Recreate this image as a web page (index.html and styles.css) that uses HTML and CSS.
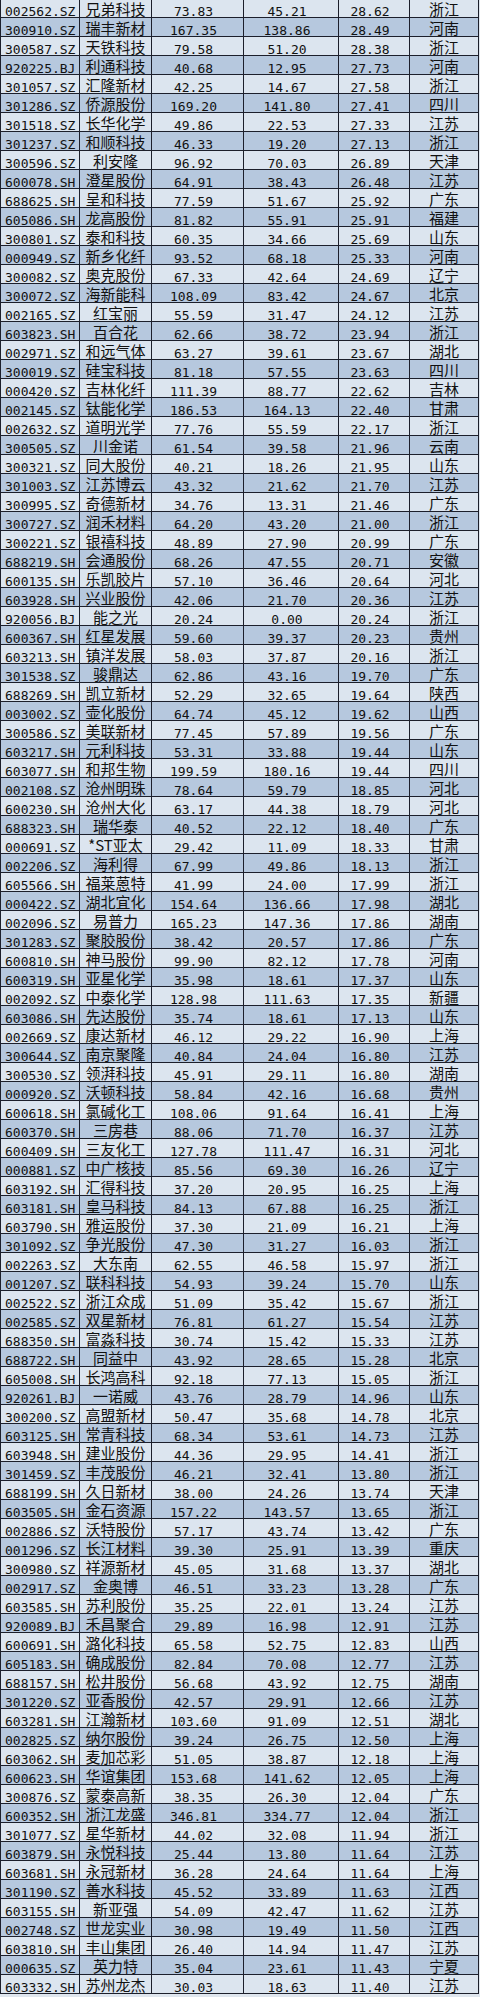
FILE: index.html
```html
<!DOCTYPE html>
<html lang="zh-CN">
<head>
<meta charset="utf-8">
<title>股票列表</title>
<link rel="stylesheet" href="styles.css">
</head>
<body>
<table class="sheet">
<colgroup>
<col class="c-code"><col class="c-name"><col class="c-a"><col class="c-b"><col class="c-c"><col class="c-prov">
</colgroup>
<tbody>
<tr><td class="code">002562.SZ</td><td class="name">兄弟科技</td><td class="num">73.83</td><td class="num">45.21</td><td class="num">28.62</td><td class="prov">浙江</td></tr>
<tr><td class="code">300910.SZ</td><td class="name">瑞丰新材</td><td class="num">167.35</td><td class="num">138.86</td><td class="num">28.49</td><td class="prov">河南</td></tr>
<tr><td class="code">300587.SZ</td><td class="name">天铁科技</td><td class="num">79.58</td><td class="num">51.20</td><td class="num">28.38</td><td class="prov">浙江</td></tr>
<tr><td class="code">920225.BJ</td><td class="name">利通科技</td><td class="num">40.68</td><td class="num">12.95</td><td class="num">27.73</td><td class="prov">河南</td></tr>
<tr><td class="code">301057.SZ</td><td class="name">汇隆新材</td><td class="num">42.25</td><td class="num">14.67</td><td class="num">27.58</td><td class="prov">浙江</td></tr>
<tr><td class="code">301286.SZ</td><td class="name">侨源股份</td><td class="num">169.20</td><td class="num">141.80</td><td class="num">27.41</td><td class="prov">四川</td></tr>
<tr><td class="code">301518.SZ</td><td class="name">长华化学</td><td class="num">49.86</td><td class="num">22.53</td><td class="num">27.33</td><td class="prov">江苏</td></tr>
<tr><td class="code">301237.SZ</td><td class="name">和顺科技</td><td class="num">46.33</td><td class="num">19.20</td><td class="num">27.13</td><td class="prov">浙江</td></tr>
<tr><td class="code">300596.SZ</td><td class="name">利安隆</td><td class="num">96.92</td><td class="num">70.03</td><td class="num">26.89</td><td class="prov">天津</td></tr>
<tr><td class="code">600078.SH</td><td class="name">澄星股份</td><td class="num">64.91</td><td class="num">38.43</td><td class="num">26.48</td><td class="prov">江苏</td></tr>
<tr><td class="code">688625.SH</td><td class="name">呈和科技</td><td class="num">77.59</td><td class="num">51.67</td><td class="num">25.92</td><td class="prov">广东</td></tr>
<tr><td class="code">605086.SH</td><td class="name">龙高股份</td><td class="num">81.82</td><td class="num">55.91</td><td class="num">25.91</td><td class="prov">福建</td></tr>
<tr><td class="code">300801.SZ</td><td class="name">泰和科技</td><td class="num">60.35</td><td class="num">34.66</td><td class="num">25.69</td><td class="prov">山东</td></tr>
<tr><td class="code">000949.SZ</td><td class="name">新乡化纤</td><td class="num">93.52</td><td class="num">68.18</td><td class="num">25.33</td><td class="prov">河南</td></tr>
<tr><td class="code">300082.SZ</td><td class="name">奥克股份</td><td class="num">67.33</td><td class="num">42.64</td><td class="num">24.69</td><td class="prov">辽宁</td></tr>
<tr><td class="code">300072.SZ</td><td class="name">海新能科</td><td class="num">108.09</td><td class="num">83.42</td><td class="num">24.67</td><td class="prov">北京</td></tr>
<tr><td class="code">002165.SZ</td><td class="name">红宝丽</td><td class="num">55.59</td><td class="num">31.47</td><td class="num">24.12</td><td class="prov">江苏</td></tr>
<tr><td class="code">603823.SH</td><td class="name">百合花</td><td class="num">62.66</td><td class="num">38.72</td><td class="num">23.94</td><td class="prov">浙江</td></tr>
<tr><td class="code">002971.SZ</td><td class="name">和远气体</td><td class="num">63.27</td><td class="num">39.61</td><td class="num">23.67</td><td class="prov">湖北</td></tr>
<tr><td class="code">300019.SZ</td><td class="name">硅宝科技</td><td class="num">81.18</td><td class="num">57.55</td><td class="num">23.63</td><td class="prov">四川</td></tr>
<tr><td class="code">000420.SZ</td><td class="name">吉林化纤</td><td class="num">111.39</td><td class="num">88.77</td><td class="num">22.62</td><td class="prov">吉林</td></tr>
<tr><td class="code">002145.SZ</td><td class="name">钛能化学</td><td class="num">186.53</td><td class="num">164.13</td><td class="num">22.40</td><td class="prov">甘肃</td></tr>
<tr><td class="code">002632.SZ</td><td class="name">道明光学</td><td class="num">77.76</td><td class="num">55.59</td><td class="num">22.17</td><td class="prov">浙江</td></tr>
<tr><td class="code">300505.SZ</td><td class="name">川金诺</td><td class="num">61.54</td><td class="num">39.58</td><td class="num">21.96</td><td class="prov">云南</td></tr>
<tr><td class="code">300321.SZ</td><td class="name">同大股份</td><td class="num">40.21</td><td class="num">18.26</td><td class="num">21.95</td><td class="prov">山东</td></tr>
<tr><td class="code">301003.SZ</td><td class="name">江苏博云</td><td class="num">43.32</td><td class="num">21.62</td><td class="num">21.70</td><td class="prov">江苏</td></tr>
<tr><td class="code">300995.SZ</td><td class="name">奇德新材</td><td class="num">34.76</td><td class="num">13.31</td><td class="num">21.46</td><td class="prov">广东</td></tr>
<tr><td class="code">300727.SZ</td><td class="name">润禾材料</td><td class="num">64.20</td><td class="num">43.20</td><td class="num">21.00</td><td class="prov">浙江</td></tr>
<tr><td class="code">300221.SZ</td><td class="name">银禧科技</td><td class="num">48.89</td><td class="num">27.90</td><td class="num">20.99</td><td class="prov">广东</td></tr>
<tr><td class="code">688219.SH</td><td class="name">会通股份</td><td class="num">68.26</td><td class="num">47.55</td><td class="num">20.71</td><td class="prov">安徽</td></tr>
<tr><td class="code">600135.SH</td><td class="name">乐凯胶片</td><td class="num">57.10</td><td class="num">36.46</td><td class="num">20.64</td><td class="prov">河北</td></tr>
<tr><td class="code">603928.SH</td><td class="name">兴业股份</td><td class="num">42.06</td><td class="num">21.70</td><td class="num">20.36</td><td class="prov">江苏</td></tr>
<tr><td class="code">920056.BJ</td><td class="name">能之光</td><td class="num">20.24</td><td class="num">0.00</td><td class="num">20.24</td><td class="prov">浙江</td></tr>
<tr><td class="code">600367.SH</td><td class="name">红星发展</td><td class="num">59.60</td><td class="num">39.37</td><td class="num">20.23</td><td class="prov">贵州</td></tr>
<tr><td class="code">603213.SH</td><td class="name">镇洋发展</td><td class="num">58.03</td><td class="num">37.87</td><td class="num">20.16</td><td class="prov">浙江</td></tr>
<tr><td class="code">301538.SZ</td><td class="name">骏鼎达</td><td class="num">62.86</td><td class="num">43.16</td><td class="num">19.70</td><td class="prov">广东</td></tr>
<tr><td class="code">688269.SH</td><td class="name">凯立新材</td><td class="num">52.29</td><td class="num">32.65</td><td class="num">19.64</td><td class="prov">陕西</td></tr>
<tr><td class="code">003002.SZ</td><td class="name">壶化股份</td><td class="num">64.74</td><td class="num">45.12</td><td class="num">19.62</td><td class="prov">山西</td></tr>
<tr><td class="code">300586.SZ</td><td class="name">美联新材</td><td class="num">77.45</td><td class="num">57.89</td><td class="num">19.56</td><td class="prov">广东</td></tr>
<tr><td class="code">603217.SH</td><td class="name">元利科技</td><td class="num">53.31</td><td class="num">33.88</td><td class="num">19.44</td><td class="prov">山东</td></tr>
<tr><td class="code">603077.SH</td><td class="name">和邦生物</td><td class="num">199.59</td><td class="num">180.16</td><td class="num">19.44</td><td class="prov">四川</td></tr>
<tr><td class="code">002108.SZ</td><td class="name">沧州明珠</td><td class="num">78.64</td><td class="num">59.79</td><td class="num">18.85</td><td class="prov">河北</td></tr>
<tr><td class="code">600230.SH</td><td class="name">沧州大化</td><td class="num">63.17</td><td class="num">44.38</td><td class="num">18.79</td><td class="prov">河北</td></tr>
<tr><td class="code">688323.SH</td><td class="name">瑞华泰</td><td class="num">40.52</td><td class="num">22.12</td><td class="num">18.40</td><td class="prov">广东</td></tr>
<tr><td class="code">000691.SZ</td><td class="name">*ST亚太</td><td class="num">29.42</td><td class="num">11.09</td><td class="num">18.33</td><td class="prov">甘肃</td></tr>
<tr><td class="code">002206.SZ</td><td class="name">海利得</td><td class="num">67.99</td><td class="num">49.86</td><td class="num">18.13</td><td class="prov">浙江</td></tr>
<tr><td class="code">605566.SH</td><td class="name">福莱蒽特</td><td class="num">41.99</td><td class="num">24.00</td><td class="num">17.99</td><td class="prov">浙江</td></tr>
<tr><td class="code">000422.SZ</td><td class="name">湖北宜化</td><td class="num">154.64</td><td class="num">136.66</td><td class="num">17.98</td><td class="prov">湖北</td></tr>
<tr><td class="code">002096.SZ</td><td class="name">易普力</td><td class="num">165.23</td><td class="num">147.36</td><td class="num">17.86</td><td class="prov">湖南</td></tr>
<tr><td class="code">301283.SZ</td><td class="name">聚胶股份</td><td class="num">38.42</td><td class="num">20.57</td><td class="num">17.86</td><td class="prov">广东</td></tr>
<tr><td class="code">600810.SH</td><td class="name">神马股份</td><td class="num">99.90</td><td class="num">82.12</td><td class="num">17.78</td><td class="prov">河南</td></tr>
<tr><td class="code">600319.SH</td><td class="name">亚星化学</td><td class="num">35.98</td><td class="num">18.61</td><td class="num">17.37</td><td class="prov">山东</td></tr>
<tr><td class="code">002092.SZ</td><td class="name">中泰化学</td><td class="num">128.98</td><td class="num">111.63</td><td class="num">17.35</td><td class="prov">新疆</td></tr>
<tr><td class="code">603086.SH</td><td class="name">先达股份</td><td class="num">35.74</td><td class="num">18.61</td><td class="num">17.13</td><td class="prov">山东</td></tr>
<tr><td class="code">002669.SZ</td><td class="name">康达新材</td><td class="num">46.12</td><td class="num">29.22</td><td class="num">16.90</td><td class="prov">上海</td></tr>
<tr><td class="code">300644.SZ</td><td class="name">南京聚隆</td><td class="num">40.84</td><td class="num">24.04</td><td class="num">16.80</td><td class="prov">江苏</td></tr>
<tr><td class="code">300530.SZ</td><td class="name">领湃科技</td><td class="num">45.91</td><td class="num">29.11</td><td class="num">16.80</td><td class="prov">湖南</td></tr>
<tr><td class="code">000920.SZ</td><td class="name">沃顿科技</td><td class="num">58.84</td><td class="num">42.16</td><td class="num">16.68</td><td class="prov">贵州</td></tr>
<tr><td class="code">600618.SH</td><td class="name">氯碱化工</td><td class="num">108.06</td><td class="num">91.64</td><td class="num">16.41</td><td class="prov">上海</td></tr>
<tr><td class="code">600370.SH</td><td class="name">三房巷</td><td class="num">88.06</td><td class="num">71.70</td><td class="num">16.37</td><td class="prov">江苏</td></tr>
<tr><td class="code">600409.SH</td><td class="name">三友化工</td><td class="num">127.78</td><td class="num">111.47</td><td class="num">16.31</td><td class="prov">河北</td></tr>
<tr><td class="code">000881.SZ</td><td class="name">中广核技</td><td class="num">85.56</td><td class="num">69.30</td><td class="num">16.26</td><td class="prov">辽宁</td></tr>
<tr><td class="code">603192.SH</td><td class="name">汇得科技</td><td class="num">37.20</td><td class="num">20.95</td><td class="num">16.25</td><td class="prov">上海</td></tr>
<tr><td class="code">603181.SH</td><td class="name">皇马科技</td><td class="num">84.13</td><td class="num">67.88</td><td class="num">16.25</td><td class="prov">浙江</td></tr>
<tr><td class="code">603790.SH</td><td class="name">雅运股份</td><td class="num">37.30</td><td class="num">21.09</td><td class="num">16.21</td><td class="prov">上海</td></tr>
<tr><td class="code">301092.SZ</td><td class="name">争光股份</td><td class="num">47.30</td><td class="num">31.27</td><td class="num">16.03</td><td class="prov">浙江</td></tr>
<tr><td class="code">002263.SZ</td><td class="name">大东南</td><td class="num">62.55</td><td class="num">46.58</td><td class="num">15.97</td><td class="prov">浙江</td></tr>
<tr><td class="code">001207.SZ</td><td class="name">联科科技</td><td class="num">54.93</td><td class="num">39.24</td><td class="num">15.70</td><td class="prov">山东</td></tr>
<tr><td class="code">002522.SZ</td><td class="name">浙江众成</td><td class="num">51.09</td><td class="num">35.42</td><td class="num">15.67</td><td class="prov">浙江</td></tr>
<tr><td class="code">002585.SZ</td><td class="name">双星新材</td><td class="num">76.81</td><td class="num">61.27</td><td class="num">15.54</td><td class="prov">江苏</td></tr>
<tr><td class="code">688350.SH</td><td class="name">富淼科技</td><td class="num">30.74</td><td class="num">15.42</td><td class="num">15.33</td><td class="prov">江苏</td></tr>
<tr><td class="code">688722.SH</td><td class="name">同益中</td><td class="num">43.92</td><td class="num">28.65</td><td class="num">15.28</td><td class="prov">北京</td></tr>
<tr><td class="code">605008.SH</td><td class="name">长鸿高科</td><td class="num">92.18</td><td class="num">77.13</td><td class="num">15.05</td><td class="prov">浙江</td></tr>
<tr><td class="code">920261.BJ</td><td class="name">一诺威</td><td class="num">43.76</td><td class="num">28.79</td><td class="num">14.96</td><td class="prov">山东</td></tr>
<tr><td class="code">300200.SZ</td><td class="name">高盟新材</td><td class="num">50.47</td><td class="num">35.68</td><td class="num">14.78</td><td class="prov">北京</td></tr>
<tr><td class="code">603125.SH</td><td class="name">常青科技</td><td class="num">68.34</td><td class="num">53.61</td><td class="num">14.73</td><td class="prov">江苏</td></tr>
<tr><td class="code">603948.SH</td><td class="name">建业股份</td><td class="num">44.36</td><td class="num">29.95</td><td class="num">14.41</td><td class="prov">浙江</td></tr>
<tr><td class="code">301459.SZ</td><td class="name">丰茂股份</td><td class="num">46.21</td><td class="num">32.41</td><td class="num">13.80</td><td class="prov">浙江</td></tr>
<tr><td class="code">688199.SH</td><td class="name">久日新材</td><td class="num">38.00</td><td class="num">24.26</td><td class="num">13.74</td><td class="prov">天津</td></tr>
<tr><td class="code">603505.SH</td><td class="name">金石资源</td><td class="num">157.22</td><td class="num">143.57</td><td class="num">13.65</td><td class="prov">浙江</td></tr>
<tr><td class="code">002886.SZ</td><td class="name">沃特股份</td><td class="num">57.17</td><td class="num">43.74</td><td class="num">13.42</td><td class="prov">广东</td></tr>
<tr><td class="code">001296.SZ</td><td class="name">长江材料</td><td class="num">39.30</td><td class="num">25.91</td><td class="num">13.39</td><td class="prov">重庆</td></tr>
<tr><td class="code">300980.SZ</td><td class="name">祥源新材</td><td class="num">45.05</td><td class="num">31.68</td><td class="num">13.37</td><td class="prov">湖北</td></tr>
<tr><td class="code">002917.SZ</td><td class="name">金奥博</td><td class="num">46.51</td><td class="num">33.23</td><td class="num">13.28</td><td class="prov">广东</td></tr>
<tr><td class="code">603585.SH</td><td class="name">苏利股份</td><td class="num">35.25</td><td class="num">22.01</td><td class="num">13.24</td><td class="prov">江苏</td></tr>
<tr><td class="code">920089.BJ</td><td class="name">禾昌聚合</td><td class="num">29.89</td><td class="num">16.98</td><td class="num">12.91</td><td class="prov">江苏</td></tr>
<tr><td class="code">600691.SH</td><td class="name">潞化科技</td><td class="num">65.58</td><td class="num">52.75</td><td class="num">12.83</td><td class="prov">山西</td></tr>
<tr><td class="code">605183.SH</td><td class="name">确成股份</td><td class="num">82.84</td><td class="num">70.08</td><td class="num">12.77</td><td class="prov">江苏</td></tr>
<tr><td class="code">688157.SH</td><td class="name">松井股份</td><td class="num">56.68</td><td class="num">43.92</td><td class="num">12.75</td><td class="prov">湖南</td></tr>
<tr><td class="code">301220.SZ</td><td class="name">亚香股份</td><td class="num">42.57</td><td class="num">29.91</td><td class="num">12.66</td><td class="prov">江苏</td></tr>
<tr><td class="code">603281.SH</td><td class="name">江瀚新材</td><td class="num">103.60</td><td class="num">91.09</td><td class="num">12.51</td><td class="prov">湖北</td></tr>
<tr><td class="code">002825.SZ</td><td class="name">纳尔股份</td><td class="num">39.24</td><td class="num">26.75</td><td class="num">12.50</td><td class="prov">上海</td></tr>
<tr><td class="code">603062.SH</td><td class="name">麦加芯彩</td><td class="num">51.05</td><td class="num">38.87</td><td class="num">12.18</td><td class="prov">上海</td></tr>
<tr><td class="code">600623.SH</td><td class="name">华谊集团</td><td class="num">153.68</td><td class="num">141.62</td><td class="num">12.05</td><td class="prov">上海</td></tr>
<tr><td class="code">300876.SZ</td><td class="name">蒙泰高新</td><td class="num">38.35</td><td class="num">26.30</td><td class="num">12.04</td><td class="prov">广东</td></tr>
<tr><td class="code">600352.SH</td><td class="name">浙江龙盛</td><td class="num">346.81</td><td class="num">334.77</td><td class="num">12.04</td><td class="prov">浙江</td></tr>
<tr><td class="code">301077.SZ</td><td class="name">星华新材</td><td class="num">44.02</td><td class="num">32.08</td><td class="num">11.94</td><td class="prov">浙江</td></tr>
<tr><td class="code">603879.SH</td><td class="name">永悦科技</td><td class="num">25.44</td><td class="num">13.80</td><td class="num">11.64</td><td class="prov">江苏</td></tr>
<tr><td class="code">603681.SH</td><td class="name">永冠新材</td><td class="num">36.28</td><td class="num">24.64</td><td class="num">11.64</td><td class="prov">上海</td></tr>
<tr><td class="code">301190.SZ</td><td class="name">善水科技</td><td class="num">45.52</td><td class="num">33.89</td><td class="num">11.63</td><td class="prov">江西</td></tr>
<tr><td class="code">603155.SH</td><td class="name">新亚强</td><td class="num">54.09</td><td class="num">42.47</td><td class="num">11.62</td><td class="prov">江苏</td></tr>
<tr><td class="code">002748.SZ</td><td class="name">世龙实业</td><td class="num">30.98</td><td class="num">19.49</td><td class="num">11.50</td><td class="prov">江西</td></tr>
<tr><td class="code">603810.SH</td><td class="name">丰山集团</td><td class="num">26.40</td><td class="num">14.94</td><td class="num">11.47</td><td class="prov">江苏</td></tr>
<tr><td class="code">000635.SZ</td><td class="name">英力特</td><td class="num">35.04</td><td class="num">23.61</td><td class="num">11.43</td><td class="prov">宁夏</td></tr>
<tr><td class="code">603332.SH</td><td class="name">苏州龙杰</td><td class="num">30.03</td><td class="num">18.63</td><td class="num">11.40</td><td class="prov">江苏</td></tr>
</tbody>
</table>
</body>
</html>
```
FILE: styles.css
```css
html, body {
  margin: 0;
  padding: 0;
  background: #dfe6ee;
}

.sheet {
  border-collapse: collapse;
  table-layout: fixed;
  width: 478px;
  margin-top: -2px;
  color: #111;
}

.c-code { width: 79px; }
.c-name { width: 72px; }
.c-a { width: 92px; }
.c-b { width: 95px; }
.c-c { width: 71px; }
.c-prov { width: 69px; }

.sheet td {
  border: 1px solid #1c1f2b;
  height: 18px;
  padding: 0;
  vertical-align: bottom;
  white-space: nowrap;
  overflow: hidden;
}

.sheet tr:nth-child(odd) td { background: #dce5ef; }
.sheet tr:nth-child(even) td { background: #b6c8de; }

.code, .num {
  font-family: "DejaVu Sans Mono", "Liberation Mono", monospace;
  font-size: 13px;
  line-height: 11px;
}

.code {
  text-align: left;
  padding-left: 4px !important;
}

.num {
  text-align: center;
  padding-right: 8px !important;
}

.name, .prov {
  font-family: "Noto Sans CJK SC", "Noto Sans", sans-serif;
  font-size: 15px;
  line-height: 17px;
  text-align: center;
}
```
